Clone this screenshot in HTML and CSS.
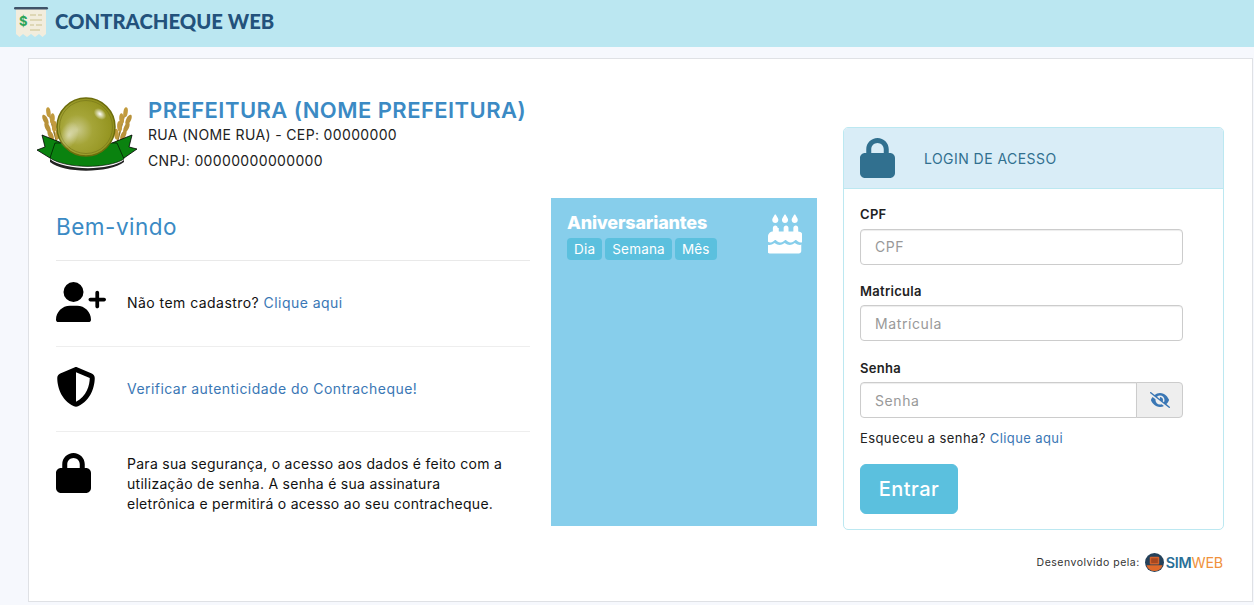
FILE: index.html
```html
<!DOCTYPE html>
<html lang="pt-BR">
<head>
  <meta charset="UTF-8" />
  <title>Contracheque Web</title>
  <link rel="stylesheet" href="styles.css">
</head>
<body>

  <header class="topbar">
    <svg class="receipt" viewBox="0 0 36 36" width="36" height="36">
      <path d="M2 5h30v26l-3.500 3-3.500-3-4 3-4-3-4 3-4-3-3.500 3-3.500-3z" fill="#f2eddd"/>
      <rect x="0" y="4" width="34" height="2.500" rx="1.200" fill="#3e5268"/>
      <text x="5" y="23" class="receipt-sign">$</text>
      <path d="M16 12h6M24 12h4M16 17h12M16 22h4M22 22h6M16 27h10" stroke="#d8cfa8" stroke-width="1.600"/>
    </svg>
    <span class="brand">CONTRACHEQUE WEB</span>
  </header>

  <main class="sheet">
    <div class="content">

      <div class="left-col">
        <div class="city">
          <svg class="emblem" viewBox="0 0 100 76" width="100" height="76">
            <defs>
              <radialGradient id="coin" cx="0.35" cy="0.55" r="0.75">
                <stop offset="0" stop-color="#c9c98a"/>
                <stop offset="0.35" stop-color="#a5a538"/>
                <stop offset="1" stop-color="#8c8c14"/>
              </radialGradient>
              <radialGradient id="shine" cx="0.5" cy="0.5" r="0.5">
                <stop offset="0" stop-color="#fff"/>
                <stop offset="1" stop-color="#fff" stop-opacity="0"/>
              </radialGradient>
              <g id="wheat">
                <path d="M3 42L-2 0" stroke="#8f7427" stroke-width="1.500"/>
                <ellipse cx="-2" cy="3" rx="2.200" ry="5" fill="#c29b3e"/>
                <ellipse cx="-6" cy="10" rx="2.400" ry="5.500" fill="#b8923a" transform="rotate(-18 -6 10)"/>
                <ellipse cx="1" cy="10" rx="2.400" ry="5.500" fill="#c29b3e" transform="rotate(12 1 10)"/>
                <ellipse cx="-5" cy="18" rx="2.400" ry="5.500" fill="#b8923a" transform="rotate(-18 -5 18)"/>
                <ellipse cx="2" cy="18" rx="2.400" ry="5.500" fill="#c29b3e" transform="rotate(12 2 18)"/>
                <ellipse cx="-3" cy="26" rx="2.400" ry="5.500" fill="#b8923a" transform="rotate(-18 -3 26)"/>
                <ellipse cx="4" cy="26" rx="2.400" ry="5.500" fill="#c29b3e" transform="rotate(12 4 26)"/>
              </g>
            </defs>
            <use href="#wheat" transform="translate(13 12) rotate(-8)"/>
            <use href="#wheat" transform="translate(87 12) scale(-1 1) rotate(-8)"/>
            <path d="M5 38l20 8-9 15-3 0-13-8 8-3z" fill="#0a820f" stroke="#000" stroke-width="0.800"/>
            <path d="M95 38l-20 8 9 15 3 0 13-9-8-2z" fill="#0a820f" stroke="#000" stroke-width="0.800"/>
            <path d="M13 62c14 12 60 12 74 1l0 2c-14 11-60 12-74 0z" fill="#222"/>
            <path d="M18 46L13 61c16 11 58 11 74 1L80 46z" fill="#0a820f" stroke="#000" stroke-width="0.600"/>
            <circle cx="49" cy="30" r="29" fill="url(#coin)" stroke="#6d6d0c" stroke-width="1.500"/>
            <circle cx="49" cy="30" r="26.500" fill="none" stroke="#77771a" stroke-width="0.700"/>
            <ellipse cx="32" cy="38" rx="9" ry="14" fill="url(#shine)" opacity="0.500" transform="rotate(20 32 38)"/>
            <ellipse cx="63" cy="17" rx="7" ry="5" fill="url(#shine)" transform="rotate(40 63 17)"/>
          </svg>
          <div class="city-info">
            <h1>PREFEITURA (NOME PREFEITURA)</h1>
            <p>RUA (NOME RUA) - CEP: 00000000</p>
            <p>CNPJ: 00000000000000</p>
          </div>
        </div>

        <div class="columns">
          <section class="welcome">
            <h2>Bem-vindo</h2>

            <div class="info-row">
              <svg class="info-icon" viewBox="0 0 640 512" width="50" height="40" preserveAspectRatio="xMinYMid"><path d="M224 256a128 128 0 1 0 0-256 128 128 0 1 0 0 256zm-45.700 48C79.800 304 0 383.800 0 482.300 0 498.700 13.300 512 29.700 512h388.600c16.400 0 29.700-13.300 29.700-29.700 0-98.500-79.800-178.300-178.300-178.300h-91.400zM504 312v-64h-64c-13.300 0-24-10.700-24-24s10.700-24 24-24h64v-64c0-13.300 10.700-24 24-24s24 10.700 24 24v64h64c13.300 0 24 10.700 24 24s-10.700 24-24 24h-64v64c0 13.300-10.700 24-24 24s-24-10.700-24-24z"/></svg>
              <p>Não tem cadastro? <a href="#">Clique aqui</a></p>
            </div>

            <div class="info-row">
              <svg class="info-icon" viewBox="0 0 512 512" width="50" height="40" preserveAspectRatio="xMinYMid"><path d="M256 0c4.600 0 9.200 1 13.400 2.900l188.300 79.900c22 9.300 38.400 31 38.300 57.200-.5 99.200-41.300 280.700-213.600 363.200-16.700 8-36.100 8-52.800 0C57.300 420.700 16.500 239.200 16 140c-.1-26.200 16.300-47.900 38.300-57.200L242.700 2.900C246.800 1 251.400 0 256 0zm0 66.800v378.100C394 378 431.100 230.100 432 141.400L256 66.800z"/></svg>
              <p><a href="#">Verificar autenticidade do Contracheque!</a></p>
            </div>

            <div class="info-row info-row-last">
              <svg class="info-icon" viewBox="0 0 448 512" width="50" height="40" preserveAspectRatio="xMinYMid"><path d="M144 144v48h160v-48c0-44.200-35.800-80-80-80s-80 35.800-80 80zM80 192v-48C80 64.500 144.500 0 224 0s144 64.500 144 144v48h16c35.300 0 64 28.700 64 64v192c0 35.300-28.700 64-64 64H64c-35.300 0-64-28.700-64-64V256c0-35.300 28.700-64 64-64h16z"/></svg>
              <p>Para sua segurança, o acesso aos dados é feito com a utilização de senha. A senha é sua assinatura eletrônica e permitirá o acesso ao seu contracheque.</p>
            </div>
          </section>

          <aside class="birthdays">
            <div class="birthdays-head">
              <div>
                <h3>Aniversariantes</h3>
                <div class="tabs">
                  <span class="tab">Dia</span>
                  <span class="tab">Semana</span>
                  <span class="tab">Mês</span>
                </div>
              </div>
              <svg class="cake" viewBox="0 0 448 512" width="34" height="40"><path d="M86.400 5.500L61.800 47.600C58 54.100 56 61.600 56 69.200V72c0 22.100 17.900 40 40 40s40-17.900 40-40v-2.800c0-7.600-2-15-5.800-21.600L105.600 5.500C103.600 2.100 100 0 96 0s-7.600 2.100-9.600 5.500zm128 0l-24.600 42.100c-3.800 6.500-5.800 14-5.800 21.600V72c0 22.100 17.900 40 40 40s40-17.900 40-40v-2.800c0-7.600-2-15-5.800-21.600L233.600 5.500C231.600 2.100 228 0 224 0s-7.600 2.100-9.600 5.500zm103.400 42.100c-3.800 6.500-5.800 14-5.800 21.600V72c0 22.100 17.900 40 40 40s40-17.900 40-40v-2.800c0-7.600-2-15-5.800-21.600L361.600 5.500C359.600 2.100 356 0 352 0s-7.600 2.100-9.600 5.500L317.800 47.600zM128 176c0-17.700-14.300-32-32-32s-32 14.300-32 32v48c-35.300 0-64 28.700-64 64v71c8.300 5.200 18.100 9 28.800 9 13.500 0 27.200-6.100 38.400-13.400 5.400-3.500 9.900-7.100 13-9.700 1.500-1.300 2.700-2.400 3.500-3.100.4-.4.700-.6.800-.8l.1-.1c3-3.200 7.300-4.900 11.600-4.900s8.500 1.700 11.600 4.900l.1.100c.2.200.4.400.8.800.8.700 2 1.800 3.500 3.100 3.100 2.600 7.500 6.200 13 9.700 11.200 7.300 24.900 13.400 38.400 13.400s27.200-6.100 38.400-13.400c5.400-3.500 9.900-7.100 13-9.700 1.500-1.300 2.700-2.400 3.500-3.100.4-.4.700-.6.800-.8l.1-.1c3-3.200 7.300-4.900 11.600-4.900s8.500 1.700 11.600 4.900l.1.100c.2.200.4.400.8.800.8.700 2 1.800 3.500 3.100 3.100 2.600 7.500 6.200 13 9.700 11.200 7.300 24.900 13.400 38.400 13.400s27.200-6.100 38.400-13.400c5.400-3.500 9.900-7.100 13-9.700 1.500-1.300 2.700-2.400 3.500-3.100.4-.4.700-.6.800-.8l.1-.1c3-3.200 7.300-4.900 11.600-4.900s8.500 1.700 11.600 4.900l.1.100c.2.200.4.400.8.800.8.700 2 1.800 3.500 3.100 3.100 2.600 7.500 6.200 13 9.700 11.200 7.300 24.900 13.400 38.400 13.400 10.700 0 20.500-3.900 28.800-9v-71c0-35.300-28.700-64-64-64v-48c0-17.700-14.300-32-32-32s-32 14.300-32 32v48h-64v-48c0-17.700-14.300-32-32-32s-32 14.300-32 32v48h-64v-48zM448 394.600c-8.500 3.300-18.200 5.400-28.800 5.400-22.500 0-42.400-9.900-55.800-18.600-4.100-2.700-7.800-5.400-10.900-7.800-3.100 2.400-6.800 5.100-10.900 7.800-13.400 8.700-33.300 18.600-55.800 18.600s-42.400-9.900-55.800-18.600c-4.100-2.700-7.800-5.400-10.900-7.800-3.100 2.400-6.800 5.100-10.900 7.800-13.400 8.700-33.300 18.600-55.800 18.600s-42.400-9.900-55.800-18.600c-4.100-2.700-7.800-5.400-10.900-7.800-3.100 2.400-6.800 5.100-10.900 7.800-13.400 8.700-33.300 18.600-55.800 18.600-10.600 0-20.300-2.200-28.800-5.400V480c0 17.700 14.300 32 32 32h384c17.700 0 32-14.300 32-32v-85.400z"/></svg>
            </div>
          </aside>
        </div>
      </div>

      <div class="right-col">
        <section class="login">
          <div class="login-head">
            <svg class="login-lock" viewBox="0 0 448 512" width="35" height="40"><path d="M144 144v48h160v-48c0-44.200-35.800-80-80-80s-80 35.800-80 80zM80 192v-48C80 64.500 144.500 0 224 0s144 64.500 144 144v48h16c35.300 0 64 28.700 64 64v192c0 35.300-28.700 64-64 64H64c-35.300 0-64-28.700-64-64V256c0-35.300 28.700-64 64-64h16z"/></svg>
            <span>LOGIN DE ACESSO</span>
          </div>
          <form class="login-body">
            <label for="cpf">CPF</label>
            <input type="text" id="cpf" placeholder="CPF">

            <label for="matricula">Matricula</label>
            <input type="text" id="matricula" placeholder="Matrícula">

            <label for="senha">Senha</label>
            <div class="input-group">
              <input type="password" id="senha" placeholder="Senha">
              <button type="button" class="eye-btn">
                <svg viewBox="0 0 640 512" width="20" height="16"><path d="M38.800 5.100C28.400-3.100 13.300-1.200 5.100 9.200S-1.200 34.700 9.200 42.900l592 464c10.400 8.200 25.500 6.300 33.700-4.100s6.300-25.500-4.100-33.700L525.600 386.700c39.600-40.600 66.400-86.100 79.900-118.400 3.300-7.900 3.300-16.700 0-24.600-14.900-35.700-46.200-87.700-93-131.100C465.500 68.800 400.800 32 320 32c-68.200 0-125 26.300-169.300 60.800L38.800 5.100zM223.100 149.500C248.600 126.200 282.700 112 320 112c79.500 0 144 64.500 144 144 0 24.900-6.300 48.300-17.400 68.700L408 294.500c8.400-19.300 10.600-41.400 4.800-63.300-11.100-41.500-47.800-69.400-88.600-71.100-5.800-.2-9.200 6.100-7.400 11.700 2.100 6.400 3.300 13.200 3.300 20.300 0 10.200-2.400 19.800-6.600 28.300l-90.300-70.800zM373 389.900c-16.400 6.500-34.300 10.100-53 10.100-79.500 0-144-64.500-144-144 0-6.900.5-13.600 1.400-20.200L83.100 161.500C60.300 191.200 44 220.800 34.500 243.700c-3.300 7.900-3.300 16.700 0 24.600 14.900 35.700 46.200 87.700 93 131.100C174.500 443.200 239.200 480 320 480c47.800 0 89.900-12.900 126.200-32.500L373 389.900z"/></svg>
              </button>
            </div>

            <p class="forgot">Esqueceu a senha? <a href="#">Clique aqui</a></p>
            <button type="submit" class="enter-btn">Entrar</button>
          </form>
        </section>

        <div class="credits">
          <span>Desenvolvido pela:</span>
          <svg class="sim-logo" viewBox="0 0 20 20" width="19" height="19">
            <circle cx="10" cy="10" r="10" fill="#24415a"/>
            <path d="M1.500 13h17a9 9 0 0 1-17 0z" fill="#e0692a"/>
            <rect x="5" y="4" width="10" height="8" rx="1" fill="#d2622c"/>
            <rect x="6.500" y="5.500" width="7" height="5" fill="#a9471f"/>
          </svg>
          <span class="sim">SIM<span class="web">WEB</span></span>
        </div>
      </div>

    </div>
  </main>

</body>
</html>
```

FILE: styles.css
```css
* { box-sizing: border-box; }
body {
  font-family: 'Inter', 'Open Sans', sans-serif;
  font-size: 14px;
  letter-spacing: 0.45px;
  margin: 0;
  height: 605px;
  overflow: hidden;
  background: #f6f8fd;
  color: #111;
}
a {
  color: #3a77b5;
  text-decoration: none;
}
.topbar {
  height: 47px;
  background: #bbe7f1;
  display: flex;
  align-items: center;
  gap: 5px;
  padding: 0 14px 5px;
}
.receipt-sign {
  font-size: 13px;
  font-weight: 700;
  fill: #2fa55a;
}
.brand {
  font-family: 'Lato', sans-serif;
  font-size: 20.300px;
  font-weight: 900;
  letter-spacing: 0;
  color: #23527c;
}
.sheet {
  margin: 11px 1px 0 28px;
  height: 544px;
  background: #fff;
  border: 1px solid #dfe1e5;
}
.content {
  display: flex;
  padding: 37px 28px 0 8px;
}
.left-col {
  width: 781px;
}
.city {
  display: flex;
  gap: 11px;
  height: 102px;
}
.emblem {
  margin-top: 1px;
}
.city-info h1 {
  margin: 1px 0 -1px;
  font-size: 22px;
  font-weight: 600;
  color: #3b8ac4;
}
.city-info p {
  margin: 0;
  height: 25.500px;
  line-height: 25px;
  color: #222;
  letter-spacing: 0.35px;
}
.columns {
  display: flex;
}
.welcome {
  width: 474px;
  margin-left: 19px;
}
.welcome h2 {
  margin: 0;
  height: 63px;
  padding-top: 15px;
  font-size: 22.500px;
  font-weight: 400;
  letter-spacing: 0.5px;
  color: #3b8ac4;
  border-bottom: 1px solid #e9e9e9;
}
.info-row {
  display: flex;
  align-items: center;
  height: 85.500px;
  border-bottom: 1px solid #eee;
}
.info-row-last {
  align-items: flex-start;
  padding-top: 21px;
  border-bottom: 0;
}
.info-row p {
  margin: 0;
  line-height: 20px;
}
.info-row-last p {
  margin-top: 1px;
  max-width: 380px;
  letter-spacing: 0.28px;
}
.info-icon {
  flex: none;
  width: 50px;
  margin: -3px 21px 0 0;
}
.info-row-last .info-icon {
  margin-top: 0;
}
.birthdays {
  width: 266px;
  height: 328px;
  margin-left: 21px;
  background: #87ceeb;
  padding: 14px 15px 14px 16px;
  color: #fff;
}
.birthdays-head {
  display: flex;
  justify-content: space-between;
}
.birthdays h3 {
  margin: 0 0 5px;
  font-size: 18px;
  font-weight: 800;
  letter-spacing: -0.2px;
}
.tabs {
  display: flex;
  gap: 3px;
}
.tab {
  background: #5bc0de;
  border-radius: 4px;
  padding: 3px 7px;
  font-size: 13.500px;
  letter-spacing: 0.2px;
}
.cake {
  fill: #fff;
  margin-top: 2px;
}
.right-col {
  width: 381px;
  margin-left: 25px;
}
.login {
  margin-top: 31px;
  background: #fff;
  border: 1px solid #bce8f1;
  border-radius: 5px;
}
.login-head {
  height: 61px;
  background: #d9edf7;
  border-bottom: 1px solid #bce8f1;
  border-radius: 4px 4px 0 0;
  display: flex;
  align-items: center;
  padding-left: 16px;
  color: #31708f;
}
.login-lock {
  fill: #31708f;
  margin-right: 29px;
}
.login-body {
  padding: 17px 16px 15px;
  display: flex;
  flex-direction: column;
  align-items: flex-start;
}
.login-body label {
  font-weight: 600;
  font-size: 13px;
  letter-spacing: 0.3px;
  color: #222;
  margin-bottom: 6.500px;
  line-height: 16px;
}
.login-body input {
  width: 323px;
  height: 36px;
  margin-bottom: 18.300px;
  padding: 6px 14px;
  font-family: inherit;
  font-size: 14px;
  letter-spacing: 0.6px;
  border: 1px solid #ccc;
  border-radius: 4px;
  box-shadow: inset 0 1px 1px rgba(0,0,0,0.075);
}
.login-body input::placeholder {
  color: #999;
}
.input-group {
  display: flex;
  width: 323px;
}
.login-body .input-group input {
  flex: 1;
  width: auto;
  min-width: 0;
  margin-bottom: 0;
  border-radius: 4px 0 0 4px;
}
.eye-btn {
  width: 47px;
  height: 36px;
  margin-left: -1px;
  padding: 0;
  background: #eee;
  border: 1px solid #ccc;
  border-radius: 0 4px 4px 0;
}
.eye-btn svg {
  fill: #3a77b5;
  display: block;
  margin: auto;
}
.forgot {
  margin: 12px 0 18px;
  font-size: 13px;
  letter-spacing: 0.4px;
  line-height: 16px;
  color: #222;
}
.enter-btn {
  width: 98px;
  height: 50px;
  background: #5bc0de;
  border: 1px solid #5bc0de;
  border-radius: 6px;
  color: #fff;
  font-family: inherit;
  font-size: 20px;
  font-weight: 500;
  letter-spacing: 0.5px;
}
.credits {
  display: flex;
  justify-content: flex-end;
  align-items: center;
  gap: 5px;
  margin-top: 23px;
  padding-right: 1px;
  font-size: 10.500px;
  letter-spacing: 0.5px;
  color: #333;
}
.sim-logo {
  margin-right: -3px;
}
.sim {
  font-size: 14.300px;
  font-weight: 600;
  letter-spacing: -0.2px;
  color: #2a6f97;
}
.web {
  color: #f0923c;
  font-weight: 400;
}
```
